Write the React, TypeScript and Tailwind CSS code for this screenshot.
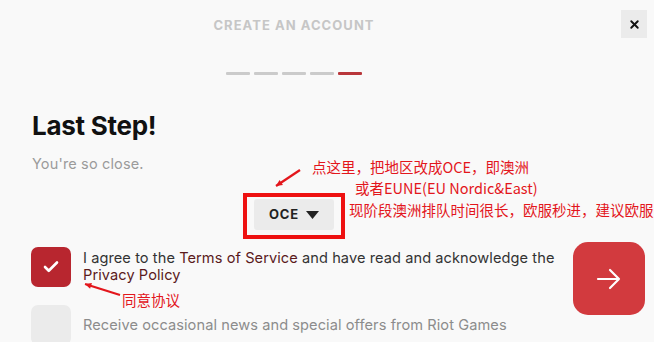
import { Check, X } from 'lucide-react'

const FONT = { fontFamily: 'Inter, "Noto Sans", sans-serif' }
const CJK = { fontFamily: '"Noto Sans CJK SC", "Noto Sans", sans-serif' }

function Steps({ total, current }: { total: number; current: number }) {
  return (
    <div className="flex gap-[4px]">
      {Array.from({ length: total }).map((_, i) => (
        <div
          key={i}
          className={`w-[24px] h-[3px] rounded-[1px] ${i === current ? 'bg-[#b9373b]' : 'bg-[#cbcbcb]'}`}
        />
      ))}
    </div>
  )
}

function RedArrow({ className, x1, y1, x2, y2 }: { className: string; x1: number; y1: number; x2: number; y2: number }) {
  // Pfeilspitze an (x2, y2)
  const a = Math.atan2(y2 - y1, x2 - x1)
  const h = 7
  const p1 = `${x2 - h * Math.cos(a - 0.45)},${y2 - h * Math.sin(a - 0.45)}`
  const p2 = `${x2 - h * Math.cos(a + 0.45)},${y2 - h * Math.sin(a + 0.45)}`
  return (
    <svg className={className} width="60" height="40" viewBox="0 0 60 40">
      <line x1={x1} y1={y1} x2={x2} y2={y2} stroke="#e3161c" strokeWidth="2.2" />
      <polygon points={`${x2},${y2} ${p1} ${p2}`} fill="#e3161c" />
    </svg>
  )
}

export default function App() {
  return (
    <div className="relative w-[654px] h-[342px] overflow-hidden bg-[#f9f9f9] text-[#222]" style={FONT}>
      <div className="flex">
        <div className="w-[588px] flex flex-col items-center pt-[18px]">
          <div className="text-[13px] leading-[14px] font-bold tracking-[0.08em] text-[#c6c6c6]">CREATE AN ACCOUNT</div>
          <div className="mt-[40px]">
            <Steps total={5} current={4} />
          </div>
        </div>
        <button className="mt-[10px] ml-[33px] w-[26px] h-[28px] bg-[#ebebeb] flex items-center justify-center">
          <X size={13} strokeWidth={3.5} className="text-[#111]" />
        </button>
      </div>

      <div className="pl-[32px] mt-[36px]">
        <h1 className="text-[26px] leading-[30px] font-bold text-[#111] tracking-[-0.01em]">Last Step!</h1>
        <p className="mt-[15px] text-[14.5px] leading-[16px] tracking-[0.01em] text-[#9b9b9b]">You're so close.</p>
      </div>

      <div className="w-[588px] flex justify-center mt-[21px]">
        <div className="border-[4px] border-[#ee1111] px-[7px] pt-[2px] pb-[5px]">
          <div className="w-[80px] h-[31px] bg-[#ebebeb] rounded-[3px] flex items-center justify-center gap-[7px]">
            <span className="text-[13px] font-bold tracking-[0.06em] text-[#222]">OCE</span>
            <svg width="13" height="8" viewBox="0 0 13 8">
              <polygon points="0,0 13,0 6.5,8" fill="#222" />
            </svg>
          </div>
        </div>
      </div>

      <div className="flex mt-[2px]">
        <div className="pl-[31px] pt-[6px] flex flex-col gap-[18px]">
          <div className="flex gap-[12px]">
            <div className="w-[40px] h-[40px] shrink-0 rounded-[7px] bg-[#b8262f] flex items-center justify-center">
              <Check size={18} strokeWidth={3.5} className="text-white" />
            </div>
            <p className="w-[480px] pt-[3px] text-[14.6px] leading-[17px] tracking-[0.005em] text-[#333]">
              I agree to the <span className="text-[#5b1a1c]">Terms of Service</span> and have read and acknowledge the{' '}
              <span className="text-[#5b1a1c]">Privacy Policy</span>
            </p>
          </div>
          <div className="flex items-center gap-[12px]">
            <div className="w-[40px] h-[40px] shrink-0 rounded-[7px] bg-[#ebebeb]" />
            <p className="text-[14.6px] leading-[17px] tracking-[0.005em] text-[#8c8c8c]">Receive occasional news and special offers from Riot Games</p>
          </div>
        </div>
        <button className="ml-[10px] mt-[1px] w-[72px] h-[73px] rounded-[15px] bg-[#d23a3e] flex items-center justify-center">
          <svg width="26" height="22" viewBox="0 0 26 22" fill="none" stroke="white" strokeWidth="2.2" strokeLinecap="round" strokeLinejoin="round">
            <path d="M2 11h21M14 2l9 9-9 9" />
          </svg>
        </button>
      </div>

      {/* Anmerkungen */}
      <div className="absolute left-[312px] top-[157px] text-[14.5px] leading-[20px] text-[#e3161c] whitespace-nowrap" style={CJK}>
        点这里，把地区改成OCE，即澳洲
      </div>
      <div className="absolute left-[355px] top-[178px] text-[14.5px] leading-[20px] text-[#e3161c] whitespace-nowrap" style={CJK}>
        或者EUNE(EU Nordic&amp;East)
      </div>
      <div className="absolute left-[349px] top-[200px] text-[14.5px] leading-[20px] text-[#e3161c] whitespace-nowrap" style={CJK}>
        现阶段澳洲排队时间很长，欧服秒进，建议欧服
      </div>
      <RedArrow className="absolute left-[270px] top-[162px]" x1={30} y1={8} x2={6} y2={24} />
      <RedArrow className="absolute left-[80px] top-[276px]" x1={40} y1={19} x2={5} y2={8} />
      <div className="absolute left-[122px] top-[290px] text-[14.5px] leading-[20px] text-[#e3161c]" style={CJK}>
        同意协议
      </div>
    </div>
  )
}
